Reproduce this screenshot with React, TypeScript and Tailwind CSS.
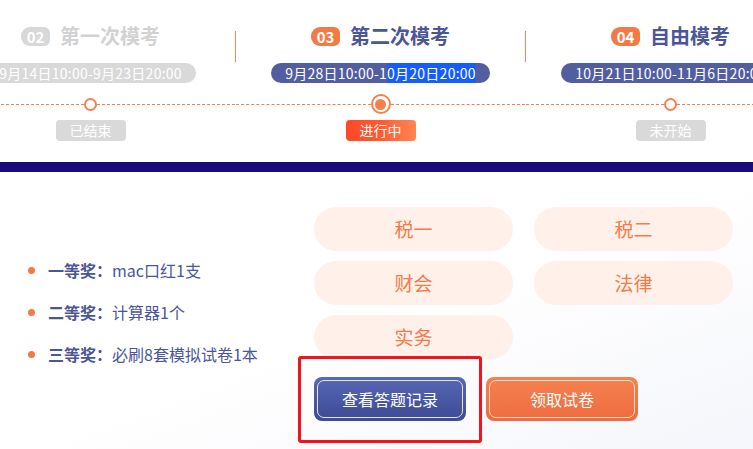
import React from 'react';

type Stage = {
	num: string;
	title: string;
	date: React.ReactNode;
	status: string;
	state: 'done' | 'active' | 'todo';
};

const stages: Stage[] = [
	{
		num: '02',
		title: '第一次模考',
		date: <span>9月14日10:00-9月23日20:00</span>,
		status: '已结束',
		state: 'done',
	},
	{
		num: '03',
		title: '第二次模考',
		date: (
			<>
				<span>9月28日10:00-1</span>
				<span className="block h-[20px] leading-[20px] bg-blue-600">0月20日20:00</span>
			</>
		),
		status: '进行中',
		state: 'active',
	},
	{
		num: '04',
		title: '自由模考',
		date: <span>10月21日10:00-11月6日20:00</span>,
		status: '未开始',
		state: 'todo',
	},
];

const prizes = [
	{ label: '一等奖', text: 'mac口红1支' },
	{ label: '二等奖', text: '计算器1个' },
	{ label: '三等奖', text: '必刷8套模拟试卷1本' },
];

const subjects = [ '税一', '税二', '财会', '法律', '实务' ];

function StageColumn( { stage }: { stage: Stage } ) {
	const done = stage.state === 'done';
	return (
		<div className="w-[289px] shrink-0 flex flex-col items-center">
			<div className="mt-[26px] h-[20px] flex items-center gap-[10px]">
				<span
					className={ `h-[19px] w-[29px] rounded-l-[9px] rounded-r-[6px] flex items-center justify-center text-white font-bold text-[15px] leading-none ${
						done ? 'bg-[#d8d8d8]' : 'bg-[#f47a45]'
					}` }
				>
					{ stage.num }
				</span>
				<span
					className={ `text-[20px] leading-[20px] font-bold ${
						done ? 'text-[#d2d2d2]' : 'text-[#4b5598]'
					}` }
				>
					{ stage.title }
				</span>
			</div>
			<div
				className={ `mt-[17px] h-[20px] px-[14px] rounded-full flex items-center whitespace-nowrap text-[14px] leading-[20px] tracking-[0.25px] text-white ${
					done ? 'bg-[#d9d9d9]' : 'bg-[#525e9f]'
				}` }
			>
				{ stage.date }
			</div>
			<div className="mt-[11px] h-[20px] w-full flex items-center">
				<div className="flex-1 border-t border-dashed border-[#f5804c]" />
				{ stage.state === 'active' ? (
					<div className="w-[20px] h-[20px] rounded-full border-2 border-[#f5804c] bg-white flex items-center justify-center">
						<div className="w-[11px] h-[11px] rounded-full bg-[#f5804c]" />
					</div>
				) : (
					<div className="w-[13px] h-[13px] rounded-full border-2 border-[#f5804c] bg-white" />
				) }
				<div className="flex-1 border-t border-dashed border-[#f5804c]" />
			</div>
			<div
				className={ `mt-[6px] h-[21px] w-[70px] rounded-[4px] flex items-center justify-center text-white text-[14px] ${
					stage.state === 'active'
						? 'bg-gradient-to-r from-[#fe4826] via-[#ff5a30] to-[#ff8551]'
						: 'bg-[#d9d9d9]'
				}` }
			>
				{ stage.status }
			</div>
		</div>
	);
}

export default function App() {
	return (
		<div
			className="w-full h-[449px] overflow-hidden bg-white"
			style={ {
				fontFamily:
					'"Noto Sans CJK SC", "Noto Sans", "Liberation Sans", sans-serif',
			} }
		>
			{ /* stage timeline */ }
			<div className="h-[162px] flex ml-[-54px]">
				<StageColumn stage={ stages[ 0 ] } />
				<div className="w-px h-[31px] mt-[31px] shrink-0 bg-[#f08a5d]" />
				<StageColumn stage={ stages[ 1 ] } />
				<div className="w-px h-[31px] mt-[31px] shrink-0 bg-[#f08a5d]" />
				<StageColumn stage={ stages[ 2 ] } />
			</div>
			<div className="h-[10px] bg-[#1b0b7b]" />

			{ /* prizes + subjects */ }
			<div className="h-[277px] flex pt-[35px] bg-gradient-to-br from-white via-white to-[#f5f6fb]">
				<div className="w-[314px] shrink-0 pl-[28px] pt-[51px] flex flex-col gap-[18px]">
					{ prizes.map( ( p ) => (
						<div
							key={ p.label }
							className="h-[24px] flex items-center gap-[13px] text-[16px] text-[#4b5598]"
						>
							<span className="w-[7px] h-[7px] rounded-full bg-[#f47a45]" />
							<span>
								<span className="font-bold">{ p.label }：</span>
								{ p.text }
							</span>
						</div>
					) ) }
				</div>
				<div className="flex flex-col">
					<div className="grid grid-cols-[199px_199px] gap-x-[21px] gap-y-[10px]">
						{ subjects.map( ( s ) => (
							<div
								key={ s }
								className="h-[44px] rounded-full bg-[#fff1ea] flex items-center justify-center text-[19px] text-[#f47b48]"
							>
								{ s }
							</div>
						) ) }
					</div>
					<div className="mt-[18px] flex gap-[20px]">
						<div className="relative">
							<button className="w-[152px] h-[44px] rounded-[8px] p-[3px] bg-gradient-to-b from-[#5768b6] to-[#3d4a94]">
								<span className="h-full w-full rounded-[7px] border border-[#e9e3d6] flex items-center justify-center text-white text-[16px]">
									查看答题记录
								</span>
							</button>
							<div className="absolute -left-[16px] -top-[21px] w-[184px] h-[87px] border-[3px] border-[#f2141a] rounded-[3px] pointer-events-none" />
						</div>
						<button className="w-[152px] h-[44px] rounded-[8px] p-[3px] bg-gradient-to-b from-[#f5814f] to-[#ee6b40]">
							<span className="h-full w-full rounded-[7px] border border-[#ffdcc6] flex items-center justify-center text-white text-[16px]">
								领取试卷
							</span>
						</button>
					</div>
				</div>
			</div>
		</div>
	);
}
